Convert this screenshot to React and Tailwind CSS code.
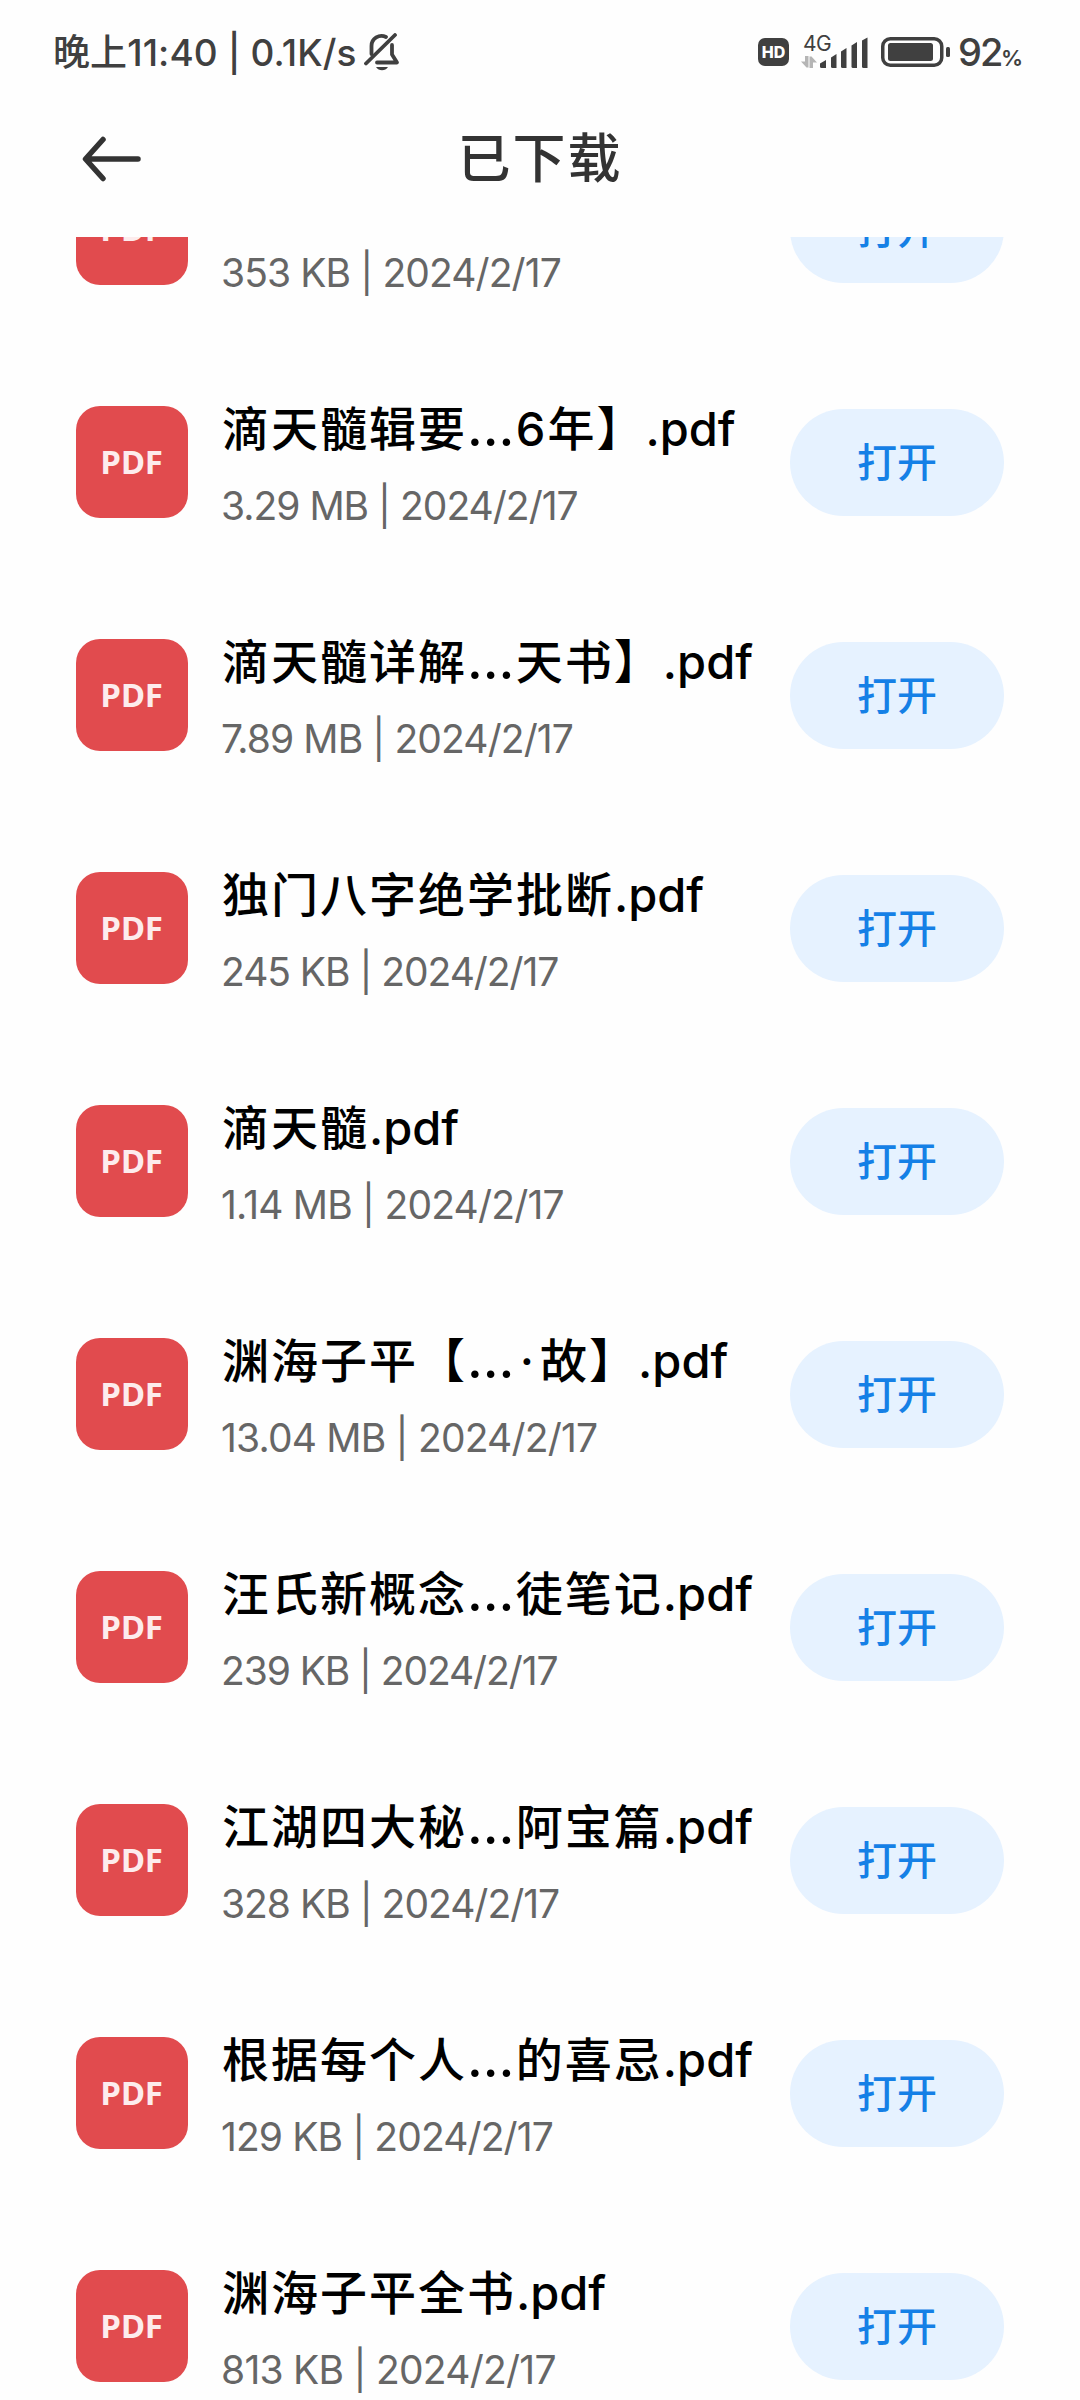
import React from 'react';

// m = letter spacing of the size/date line
const files = [
  { name: '', ext: '', meta: '353 KB | 2024/2/17', m: 'tracking-[-0.9px]' },
  { name: '滴天髓辑要…6年】', ext: '.pdf', meta: '3.29 MB | 2024/2/17', m: 'tracking-[-1px]' },
  { name: '滴天髓详解…天书】', ext: '.pdf', meta: '7.89 MB | 2024/2/17', m: 'tracking-[-0.9px]' },
  { name: '独门八字绝学批断', ext: '.pdf', meta: '245 KB | 2024/2/17', m: 'tracking-[-1.05px]' },
  { name: '滴天髓', ext: '.pdf', meta: '1.14 MB | 2024/2/17', m: 'tracking-[-0.8px]' },
  { name: '渊海子平【…·故】', ext: '.pdf', meta: '13.04 MB | 2024/2/17', m: 'tracking-[-0.8px]' },
  { name: '汪氏新概念…徒笔记', ext: '.pdf', meta: '239 KB | 2024/2/17', m: 'tracking-[-1.1px]' },
  { name: '江湖四大秘…阿宝篇', ext: '.pdf', meta: '328 KB | 2024/2/17', m: 'tracking-[-1px]' },
  { name: '根据每个人…的喜忌', ext: '.pdf', meta: '129 KB | 2024/2/17', m: 'tracking-[-0.9px]' },
  { name: '渊海子平全书', ext: '.pdf', meta: '813 KB | 2024/2/17', m: 'tracking-[-0.75px]' },
];

function BellOff() {
  return (
    <svg width="36" height="38" viewBox="0 0 36 38" fill="none" stroke="#404040" strokeWidth="3.8" strokeLinecap="round" strokeLinejoin="round">
      <path d="M7.500 21V13A10 10 0 0 1 22 4" />
      <path d="M28 12V21.500L33 29.500H13" />
      <path d="M2 30.500L31 2" />
      <path d="M12 34H24C22.500 36.300 20.500 37.200 18 37.200S13.500 36.300 12 34Z" fill="#404040" stroke="none" />
    </svg>
  );
}

function Signal() {
  return (
    <svg width="68" height="36" viewBox="0 0 68 36">
      <g fill="#b5b5b5">
        <path d="M4 22H7.500V33.500H5.500L0 27.500H4Z" />
        <path d="M12 34H8.500V22.500H10.500L16 28.500H12Z" />
      </g>
      <g fill="#404040">
        <path d="M19 29.500L25 26V34H20.500Q19 34 19 32.500Z" />
        <path d="M30 23.500L35.500 20V34H31.500Q30 34 30 32.500Z" />
        <path d="M40 17.500L45.500 14V34H41.500Q40 34 40 32.500Z" />
        <path d="M50.500 11.500L56 8V34H52Q50.500 34 50.500 32.500Z" />
        <path d="M61 6.500L66.500 3.500V34H62.500Q61 34 61 32.500Z" />
      </g>
    </svg>
  );
}

function Battery() {
  return (
    <svg width="70" height="30" viewBox="0 0 70 30">
      <rect x="1.750" y="1.750" width="59" height="26.500" rx="7.500" fill="none" stroke="#404040" strokeWidth="3.500" />
      <rect x="7" y="6" width="45" height="18" rx="2.500" fill="#404040" />
      <rect x="65" y="10" width="4" height="10" rx="1.500" fill="#404040" />
    </svg>
  );
}

function StatusBar() {
  return (
    <div className="flex h-[104px] items-center pl-[53px] pr-[58px] text-[#404040]">
      <span className="w-[303px] whitespace-nowrap text-[37px] font-medium leading-none tracking-[0.1px]">晚上11:40 | 0.1K/s</span>
      <span className="ml-2"><BellOff /></span>
      <div className="ml-auto flex items-center">
        <span className="flex h-[28px] w-[31px] items-center justify-center rounded-[7px] bg-[#404040] text-[16px] font-extrabold leading-none text-white">HD</span>
        <div className="relative ml-[12px]">
          <Signal />
          <span className="absolute left-[2px] top-0 text-[21px] font-normal leading-[20px] tracking-[-0.5px]">4G</span>
        </div>
        <span className="ml-[12px]"><Battery /></span>
        <span className="ml-[7px] flex items-baseline leading-none">
          <span className="w-[43px] text-[38px] font-medium leading-none tracking-[-2px]">92</span>
          <span className="w-[21px] text-[22px] font-semibold leading-none">%</span>
        </span>
      </div>
    </div>
  );
}

// The ellipsis and middle dot sit wider than the other characters
function FileName({ name }) {
  return name.split(/([…·])/).map((part, i) => {
    if (part === '…') return <span key={i} className="text-[52px] leading-none tracking-[1.5px]">{part}</span>;
    if (part === '·') return <span key={i} className="ml-[4px] tracking-[6px]">{part}</span>;
    return <span key={i} className="tracking-[2px]">{part}</span>;
  });
}

function FileRow({ file }) {
  return (
    <li className="flex h-[233px] shrink-0 items-center pl-[76px] pr-[76px]">
      <div className="flex h-28 w-28 shrink-0 items-center justify-center rounded-[24px] bg-[#e14b4e] pr-px font-['Open_Sans'] text-[33px] font-bold leading-none tracking-[-0.3px] text-[#fdeced]">PDF</div>
      <div className="ml-[34px] flex w-[568px] shrink-0 flex-col whitespace-nowrap pt-[9px]">
        <span className="h-[60px] text-[47px] font-medium leading-[60px] text-black">
          <FileName name={file.name} />
          <span>{file.ext}</span>
        </span>
        <span className={`-ml-px mt-[19px] text-[39px] font-normal leading-[56px] text-[#666] ${file.m}`}>{file.meta}</span>
      </div>
      <button className="mt-[2px] h-[107px] w-[214px] shrink-0 rounded-full bg-[#e6f2ff] text-[40px] font-medium leading-none text-[#1580e6]">打开</button>
    </li>
  );
}

export default function App() {
  return (
    <div className="flex h-[2400px] w-[1080px] flex-col overflow-hidden bg-[#fefefe] font-['Inter','Noto_Sans_CJK_SC',sans-serif]">
      <StatusBar />

      {/* Title bar */}
      <header className="grid h-[133px] shrink-0 grid-cols-[1fr_auto_1fr] items-center pb-[23px]">
        <svg className="-mt-px ml-[82px]" width="60" height="48" viewBox="0 0 60 48" fill="none" stroke="#333" strokeWidth="5.5" strokeLinecap="round" strokeLinejoin="round">
          <path d="M56 24H4M21 4.500L3.500 24L21 43.500" />
        </svg>
        <h1 className="text-[53px] font-medium leading-none tracking-[2px] text-[#333]">已下载</h1>
      </header>

      {/* Download list */}
      <div className="flex-1 overflow-hidden">
        <ul className="-mt-[125px]">
          {files.map((file) => <FileRow key={file.meta} file={file} />)}
        </ul>
      </div>
    </div>
  );
}
